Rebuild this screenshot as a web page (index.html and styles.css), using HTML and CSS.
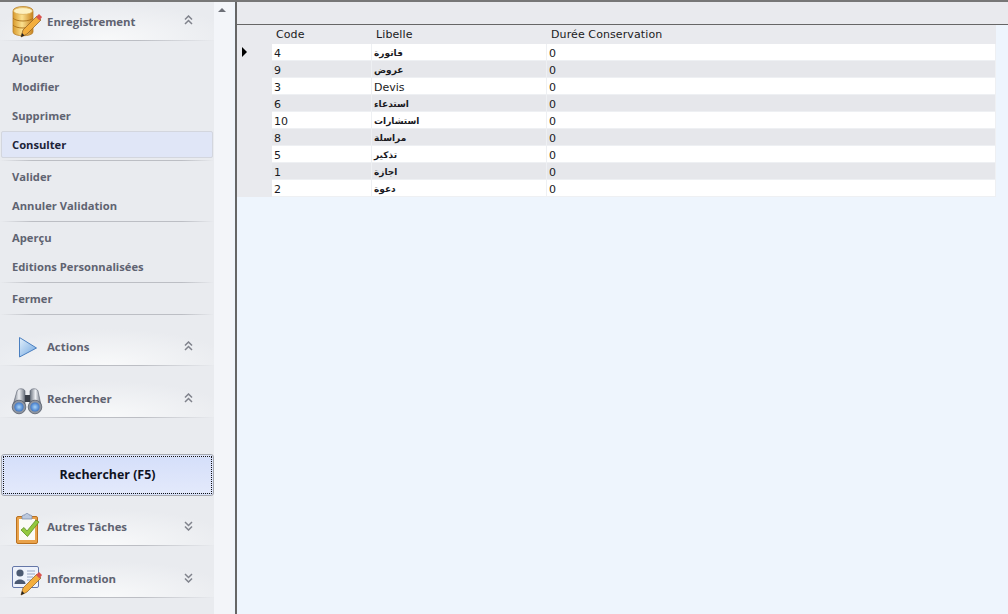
FILE: index.html
```html
<!DOCTYPE html>
<html lang="fr">
<head>
<meta charset="utf-8">
<title>Types de documents</title>
<link rel="stylesheet" href="styles.css">
</head>
<body>
<div class="app">
  <aside class="sidebar">
    <div class="panel">
      <section class="group-head first">
        <svg class="ico" viewBox="0 0 32 32"><defs><linearGradient id="gold" x1="0" x2="1" y1="0" y2="0"><stop offset="0" stop-color="#d99a2b"/><stop offset=".45" stop-color="#fbe08f"/><stop offset="1" stop-color="#c8821c"/></linearGradient></defs><path d="M2 5c0-6 20-6 20 0v21c0 5-20 5-20 0z" fill="url(#gold)" stroke="#b9822e" stroke-width=".8"/><ellipse cx="12" cy="5" rx="9.500" ry="3.400" fill="#fdf0c0" stroke="#d9a94e" stroke-width=".7"/><path d="M2 12c3 4 17 4 20 0M2 19c3 4 17 4 20 0" fill="none" stroke="#a96f1a" stroke-width=".9"/><path d="M10 31l2-7L26 10l4 4-14 14z" fill="#f3ae3d" stroke="#8a5a20" stroke-width=".7"/><path d="M25 11l3-3 3 3-2.500 3.500z" fill="#d9534f"/><path d="M10 31l1-4 2.500 2.500z" fill="#222"/></svg>
        <span class="title">Enregistrement</span>
        <svg class="chev" viewBox="0 0 9 10"><path d="M1 4.500l3.500-3.500 3.500 3.500M1 9l3.500-3.500L8 9" fill="none" stroke="#80838c" stroke-width="1.500"/></svg>
      </section>
      <ul class="items top">
        <li class="item">Ajouter</li>
        <li class="item">Modifier</li>
        <li class="item">Supprimer</li>
        <li class="item active">Consulter</li>
      </ul>
      <hr class="sep tight">
      <ul class="items">
        <li class="item">Valider</li>
        <li class="item">Annuler Validation</li>
      </ul>
      <hr class="sep">
      <ul class="items">
        <li class="item">Aperçu</li>
        <li class="item">Editions Personnalisées</li>
      </ul>
      <hr class="sep">
      <ul class="items">
        <li class="item">Fermer</li>
      </ul>
      <hr class="sep last">

      <section class="group-head">
        <svg class="ico" viewBox="0 0 32 32"><defs><linearGradient id="play" x1="0" x2="1" y1="0" y2="1"><stop offset="0" stop-color="#e3f0fb"/><stop offset="1" stop-color="#6ea5e0"/></linearGradient></defs><path d="M8.500 5.500L25.500 16 8.500 25z" fill="url(#play)" stroke="#4a7fc0" stroke-width="1"/></svg>
        <span class="title">Actions</span>
        <svg class="chev" viewBox="0 0 9 10"><path d="M1 4.500l3.500-3.500 3.500 3.500M1 9l3.500-3.500L8 9" fill="none" stroke="#80838c" stroke-width="1.500"/></svg>
      </section>
      <section class="group-head">
        <svg class="ico" viewBox="0 0 32 32"><defs><radialGradient id="lens"><stop offset="0" stop-color="#a9d4f7"/><stop offset="1" stop-color="#3f78c9"/></radialGradient><linearGradient id="bin" x1="0" x2="1" y1="0" y2="0"><stop offset="0" stop-color="#6a717d"/><stop offset=".5" stop-color="#eef0f4"/><stop offset="1" stop-color="#6a717d"/></linearGradient></defs><path d="M2 21l4-14c1-3 7-3 8 0v14z" fill="url(#bin)" stroke="#5a6270" stroke-width=".6"/><path d="M30 21l-3-14c-1-3-7-3-8 0v14z" fill="url(#bin)" stroke="#5a6270" stroke-width=".6"/><rect x="14" y="11" width="5" height="7" fill="#3a3f49"/><circle cx="8" cy="23" r="6.800" fill="#8d94a0" stroke="#4b525e" stroke-width=".7"/><circle cx="24" cy="23" r="6.800" fill="#8d94a0" stroke="#4b525e" stroke-width=".7"/><circle cx="8" cy="23" r="4.600" fill="url(#lens)"/><circle cx="24" cy="23" r="4.600" fill="url(#lens)"/></svg>
        <span class="title">Rechercher</span>
        <svg class="chev" viewBox="0 0 9 10"><path d="M1 4.500l3.500-3.500 3.500 3.500M1 9l3.500-3.500L8 9" fill="none" stroke="#80838c" stroke-width="1.500"/></svg>
      </section>

      <button class="search" type="button"><span class="search-inner">Rechercher (F5)</span></button>

      <section class="group-head after-btn">
        <svg class="ico" viewBox="0 0 32 32"><rect x="5.500" y="4.500" width="21" height="27" rx="1.500" fill="#e9a24a" stroke="#b9701f"/><rect x="8" y="7" width="16" height="21" fill="#fbfaf5"/><path d="M11 4.500c0-1.500 2-1.500 3-1.500 0-2 4-2 4 0 1 0 3 0 3 1.500V7H11z" fill="#bcc9de" stroke="#7284a4" stroke-width=".7"/><path d="M10 18l3-2.500 3 3.500 9-11 3 2-11.500 14.500z" fill="#93c83e" stroke="#5f8f22" stroke-width=".8"/></svg>
        <span class="title">Autres Tâches</span>
        <svg class="chev" viewBox="0 0 9 10"><path d="M1 1l3.500 3.500L8 1M1 5.500L4.500 9 8 5.500" fill="none" stroke="#80838c" stroke-width="1.500"/></svg>
      </section>
      <section class="group-head">
        <svg class="ico" viewBox="0 0 32 32"><rect x="1.500" y="2.500" width="26" height="21" rx="1.500" fill="#eef2fb" stroke="#6577a8"/><circle cx="9" cy="9" r="3.600" fill="#4c5a72"/><path d="M3.500 20c0-6 11-6 11 0z" fill="#4c5a72"/><path d="M16 7h8M16 10h8M16 13h6M16 16h4" stroke="#98a6c4" stroke-width="1"/><path d="M10 31l2-7 14-14 4 4-14 14z" fill="#f3ae3d" stroke="#8a5a20" stroke-width=".7"/><path d="M25 11l3-3 3 3-2.500 3.500z" fill="#d9534f"/><path d="M10 31l1-4 2.500 2.500z" fill="#222"/></svg>
        <span class="title">Information</span>
        <svg class="chev" viewBox="0 0 9 10"><path d="M1 1l3.500 3.500L8 1M1 5.500L4.500 9 8 5.500" fill="none" stroke="#80838c" stroke-width="1.500"/></svg>
      </section>
    </div>
    <div class="strip"><span class="arrow-up"></span></div>
  </aside>
  <main class="main">
    <div class="toolbar"></div>
    <div class="grid">
      <div class="grid-head">
        <span class="gutter"></span><span class="c1">Code</span><span class="c2">Libelle</span><span class="c3">Durée Conservation</span>
      </div>
      <div class="row"><span class="gutter"><i class="marker"></i></span><span class="c1">4</span><span class="c2 ar" dir="rtl">فاتورة</span><span class="c3">0</span></div>
      <div class="row alt"><span class="gutter"></span><span class="c1">9</span><span class="c2 ar" dir="rtl">عروض</span><span class="c3">0</span></div>
      <div class="row"><span class="gutter"></span><span class="c1">3</span><span class="c2">Devis</span><span class="c3">0</span></div>
      <div class="row alt"><span class="gutter"></span><span class="c1">6</span><span class="c2 ar" dir="rtl">استدعاء</span><span class="c3">0</span></div>
      <div class="row"><span class="gutter"></span><span class="c1">10</span><span class="c2 ar" dir="rtl">استشارات</span><span class="c3">0</span></div>
      <div class="row alt"><span class="gutter"></span><span class="c1">8</span><span class="c2 ar" dir="rtl">مراسلة</span><span class="c3">0</span></div>
      <div class="row"><span class="gutter"></span><span class="c1">5</span><span class="c2 ar" dir="rtl">تذكير</span><span class="c3">0</span></div>
      <div class="row alt"><span class="gutter"></span><span class="c1">1</span><span class="c2 ar" dir="rtl">اجازة</span><span class="c3">0</span></div>
      <div class="row"><span class="gutter"></span><span class="c1">2</span><span class="c2 ar" dir="rtl">دعوة</span><span class="c3">0</span></div>
    </div>
  </main>
</div>
</body>
</html>
```
FILE: styles.css
```css
* { box-sizing: border-box; }
html, body { margin: 0; height: 100%; overflow: hidden; }
body { background: #eef5fd; font-family: "DejaVu Sans", sans-serif; }
.app { display: flex; height: 614px; border-top: 2px solid #777; }
.sidebar { width: 235px; display: flex; flex: none; background: #e9ebef; }
.panel { width: 214px; padding-top: 1px; }
.strip { width: 21px; background: linear-gradient(90deg, #f3f5f9 85%, #eef5fd 100%); padding: 6px 0 0 4px; }
.arrow-up { display: block; width: 0; height: 0; border: 4px solid transparent; border-top: 0; border-bottom: 4px solid #6d7078; }
.group-head { height: 37px; margin-top: 14px; display: flex; align-items: center; padding-left: 11px;
  background: radial-gradient(ellipse 60% 100% at 50% 100%, #f8f9fa 0%, #e9ebef 100%);
  border-bottom: 1px solid transparent; border-image: linear-gradient(90deg, #e9ebef 0, #bcbec4 35%, #bcbec4 65%, #e9ebef 100%) 1; }
.group-head + .group-head { margin-top: 15px; }
.group-head.first { margin-top: 0; height: 38px; }
.group-head.first .title { padding-bottom: 0; }
.group-head.after-btn { margin-top: 13px; }
.ico { width: 32px; height: 32px; flex: none; margin-top: 1px; }
.title { margin-left: 4px; padding-bottom: 2px; font: bold 11.4px "Open Sans", "DejaVu Sans", sans-serif; color: #5f6371; flex: 1; }
.chev { width: 9px; height: 10px; margin-right: 21px; flex: none; margin-top: -3px; }
.items { list-style: none; margin: 0; padding: 0; }
.items.top { padding-top: 3px; }
.item { height: 29px; display: flex; align-items: center; padding: 0 0 2px 12px; font: bold 11.2px "Open Sans", "DejaVu Sans", sans-serif; color: #5f6371; }
.item.active { color: #1c2338; height: 27px; margin: 0 1px 2px; padding: 0 0 0 10px; background: #e0e6f7; border: 1px solid #d3d6de; border-radius: 2px; }
.sep { height: 1px; margin: 0 0 2px; border: 0; background: linear-gradient(90deg, #e9ebef 0, #bcbec4 15%, #bcbec4 85%, #e9ebef 100%); }
.sep.last { margin-bottom: 0; }
.search { display: block; width: 213px; height: 42px; margin: 36px 0 0 1px; padding: 1px; border: 1px solid #a7a9ae; border-radius: 3px; background: #dbe3fb; }
.search-inner { display: flex; height: 100%; align-items: center; justify-content: center; padding-bottom: 1px; border: 1px dotted #111; background: linear-gradient(#d5dffa, #e3e9fb); font: bold 12.4px "Open Sans", "DejaVu Sans", sans-serif; color: #10131f; }
.main { flex: 1; min-width: 0; border-left: 2px solid #666; }
.toolbar { height: 23px; background: #e9eaee; border-bottom: 1px solid #666; }
.grid { width: 759px; font-size: 11px; color: #1a1a22; }
.grid-head, .row { display: flex; align-items: center; }
.grid-head { height: 19px; background: #e9eaee; letter-spacing: .1px; }
.grid-head .c1, .grid-head .c2, .grid-head .c3 { padding-left: 4px; }
.row { height: 17px; background: #fff; }
.row .c1, .row .c2, .row .c3 { padding-top: 2px; border-right: 1px solid #eef0f3; height: 100%; display: flex; align-items: center; border-bottom: 1px solid #eef0f3; }
.row.alt { background: #e6e7eb; }
.gutter { width: 35px; flex: none; height: 100%; background: #e9eaee; display: flex; align-items: center; padding-left: 5px; }
.marker { display: block; width: 0; height: 0; margin-bottom: 2px; border: 5px solid transparent; border-right: 0; border-left: 5px solid #000; }
.c1 { width: 100px; flex: none; padding-left: 2px; }
.c2 { width: 175px; flex: none; padding-left: 2px; }
.c3 { flex: 1; padding-left: 2px; }
.ar { font-weight: bold; font-size: 9px; justify-content: flex-end; }
```
